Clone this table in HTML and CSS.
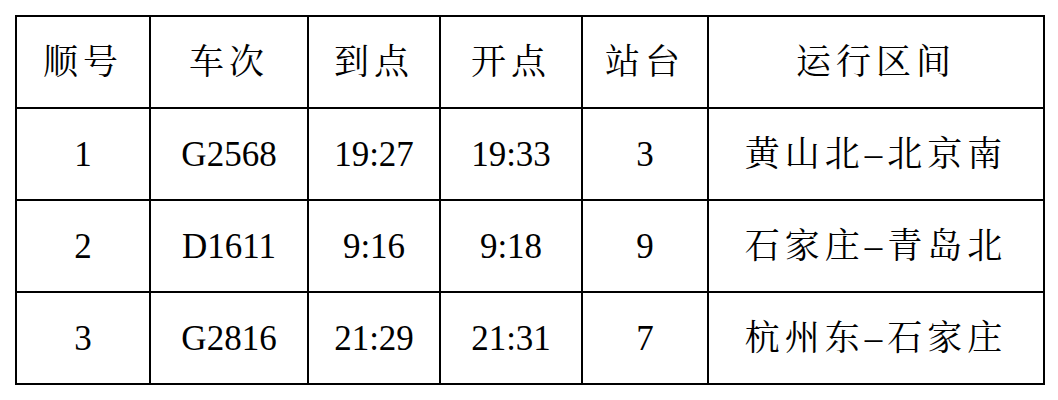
FILE: index.html
```html
<!DOCTYPE html>
<html lang="zh-CN">
<head>
<meta charset="utf-8">
<link rel="stylesheet" href="styles.css">
</head>
<body>
<table class="sched">
  <colgroup>
    <col class="c1"><col class="c2"><col class="c3"><col class="c4"><col class="c5"><col class="c6">
  </colgroup>
  <tr class="head">
    <td class="cjk">顺号</td>
    <td class="cjk">车次</td>
    <td class="cjk">到点</td>
    <td class="cjk">开点</td>
    <td class="cjk">站台</td>
    <td class="cjk">运行区间</td>
  </tr>
  <tr>
    <td>1</td>
    <td>G2568</td>
    <td>19:27</td>
    <td>19:33</td>
    <td>3</td>
    <td class="cjk">黄山北–北京南</td>
  </tr>
  <tr>
    <td>2</td>
    <td>D1611</td>
    <td>9:16</td>
    <td>9:18</td>
    <td>9</td>
    <td class="cjk">石家庄–青岛北</td>
  </tr>
  <tr>
    <td>3</td>
    <td>G2816</td>
    <td>21:29</td>
    <td>21:31</td>
    <td>7</td>
    <td class="cjk">杭州东–石家庄</td>
  </tr>
</table>
</body>
</html>
```

FILE: styles.css
```css
html, body {
  margin: 0;
  padding: 0;
  background: #ffffff;
}
body {
  padding: 15px 0 0 15px;
}
.sched {
  border-collapse: collapse;
  table-layout: fixed;
  width: 1028px;
  font-family: "Liberation Serif", "Noto Serif CJK SC", "Source Han Serif SC", "AR PL UMing CN", serif;
  font-size: 35px;
  color: #000;
}
.sched td {
  border: 2px solid #000;
  height: 90px;
  padding: 0;
  text-align: center;
  vertical-align: middle;
  line-height: 1;
}
.sched .c1 { width: 134px; }
.sched .c2 { width: 158px; }
.sched .c3 { width: 132px; }
.sched .c4 { width: 142px; }
.sched .c5 { width: 126px; }
.sched .c6 { width: 336px; }
.sched .cjk {
  letter-spacing: 5px;
}
```
